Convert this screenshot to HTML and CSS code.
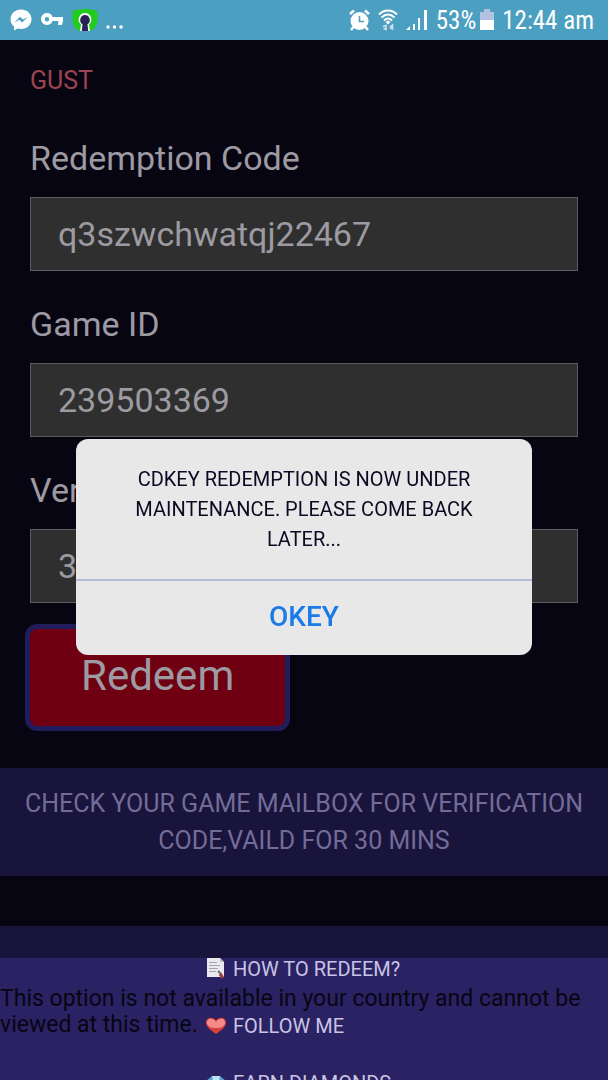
FILE: index.html
```
<!DOCTYPE html>
<html lang="en">
<head>
    <meta charset="UTF-8">
    <meta name="viewport" content="width=device-width, initial-scale=1.0">
    <title>Redemption Center</title>
    <link rel="stylesheet" href="styles.css">
</head>
<body>
    <header class="status-bar">
        <div class="status-left">
            <svg width="22" height="22" viewBox="0 0 22 22">
                <path fill="#fff" d="M11 0.5C5 0.5 0.5 4.800 0.500 10.200c0 3 1.300 5.500 3.500 7.300V21.500l3.500-2c1.100.3 2.300.500 3.500.500 6 0 10.500-4.300 10.500-9.800S17 0.500 11 0.500z"/>
                <path fill="#4b9fc0" d="M4.500 13.500L10 7.800l3 2.800 4.800-2.800-5.600 5.700-2.900-2.800z"/>
            </svg>
            <svg width="24" height="16" viewBox="0 0 24 16">
                <path fill="#fff" fill-rule="evenodd" d="M7 1a6 6 0 0 1 5.600 4H23v4l-1 4h-4l.5-4h-5.900A6 6 0 1 1 7 1zm0 4a2.200 2.200 0 1 0 0 4.400A2.200 2.200 0 0 0 7 5z"/>
            </svg>
            <svg width="26" height="24" viewBox="0 0 26 24">
                <path fill="#22cc1c" d="M3 2.500C9 .5 17 .5 23 2.500c2 0 2.500 1 2.500 3V12c0 5-3 9-7 11h-11c-4-2-7-6-7-11V5.500c0-2 .5-3 2.500-3z"/>
                <path fill="#fff" d="M13 5a6.500 6.500 0 0 1 4 11.500l1 6.500H8l1-6.500A6.500 6.500 0 0 1 13 5z"/>
                <path fill="#262450" d="M13 7a5 5 0 0 1 2.500 9.200L16.200 23H9.800l.7-6.800A5 5 0 0 1 13 7z"/>
            </svg>
            <svg width="18" height="22" viewBox="0 0 18 22">
                <g fill="#fff"><circle cx="2" cy="18" r="1.700"/><circle cx="8.500" cy="18" r="1.700"/><circle cx="15" cy="18" r="1.700"/></g>
            </svg>
        </div>
        <div class="status-right">
            <svg width="21" height="22" viewBox="0 0 21 22">
                <circle cx="10.500" cy="12" r="9" fill="#fff"/>
                <path stroke="#fff" stroke-width="2.500" fill="none" d="M1 5l4-3.500M20 5l-4-3.500M4.500 18L2 21M16.500 18l2.500 3"/>
                <path stroke="#4b9fc0" stroke-width="1.500" fill="none" d="M10.500 7v5.500H15"/>
            </svg>
            <svg width="20" height="22" viewBox="0 0 20 22">
                <g fill="none" stroke="#fff" stroke-width="2"><path d="M1 5.500c5-5.500 13-5.500 18 0"/><path d="M3.500 8.500c4-4 9-4 13 0"/><path d="M6 11.500c2.500-2.500 5.500-2.500 8 0"/></g>
                <path fill="#fff" d="M10 11.500l2.500 1.500-2.500 2.500L7.500 13z"/>
                <path fill="none" stroke="#d8e4f2" stroke-width="1.500" d="M5 17.500l3-1v4l-2.500-1M12 18l2.500-2v4l-2.500-1.500"/>
            </svg>
            <svg width="22" height="22" viewBox="0 0 22 22">
                <path fill="#fff" d="M0 21l4-4v4zM7 15h2v6H7zM12 9h2v12h-2zM18 1h3v20h-3z"/>
            </svg>
            <span class="battery-level">53%</span>
            <svg width="14" height="22" viewBox="0 0 14 22">
                <path fill="#b4c2e2" d="M4 0h6v3h4v9H0V3h4z"/>
                <path fill="#fff" d="M0 11h14v10H0z"/>
            </svg>
            <span class="clock">12:44 am</span>
        </div>
    </header>

    <main>
        <form class="redeem-form">
            <p class="player-name">GUST</p>
            <label for="code">Redemption Code</label>
            <input type="text" id="code" value="q3szwchwatqj22467">
            <label for="gameId">Game ID</label>
            <input type="text" id="gameId" value="239503369">
            <label for="verify">Verification Code</label>
            <input type="text" id="verify" value="3">
            <button type="button" class="redeem-btn">Redeem</button>
        </form>
        <p class="hint">CHECK YOUR GAME MAILBOX FOR VERIFICATION CODE,VAILD FOR 30 MINS</p>
    </main>

    <footer>
        <p class="unavailable">This option is not available in your country and cannot be viewed at this time.</p>
        <nav class="menu">
            <a href="#">
                <svg width="22" height="22" viewBox="0 0 22 22">
                    <path fill="#e9e9ee" d="M2 0h13l4 4v15H2z"/>
                    <path fill="#b9bac6" d="M15 0v4h4z"/>
                    <path stroke="#a3a5b0" d="M4 4.500h8M4 7.500h11M4 10.500h9M4 13.500h7"/>
                    <path stroke="#6d6870" stroke-width="2" d="M13 13l4 4"/>
                    <path stroke="#a03c3c" stroke-width="3" d="M15 16l3 4"/>
                </svg>
                HOW TO REDEEM?
            </a>
            <a href="#">
                <svg width="22" height="22" viewBox="0 0 22 22">
                    <path fill="#d8403f" d="M11 19C5 15 1 11.500 1 7.500 1 2 8 1 11 5.500 14 1 21 2 21 7.500c0 4-4 7.500-10 11.500z"/>
                    <path fill="#f58a88" d="M2 9C1 3 8 2 11 7c3-5 10-4 9 2-2 3-4 4-9 4s-7-1-9-4z"/>
                </svg>
                FOLLOW ME
            </a>
            <a href="#">
                <svg width="22" height="22" viewBox="0 0 22 22">
                    <path fill="#5d9fd0" d="M7 4h8l6 5-10 12L1 9z"/>
                    <path fill="#b9e4f5" d="M7 4h8l-1 5H8z"/>
                </svg>
                EARN DIAMONDS
            </a>
        </nav>
    </footer>

    <div class="overlay">
        <div class="dialog" role="alertdialog" aria-describedby="dialogText">
            <p id="dialogText">CDKEY REDEMPTION IS NOW UNDER MAINTENANCE. PLEASE COME BACK LATER...</p>
            <button type="button">OKEY</button>
        </div>
    </div>
</body>
</html>
```
FILE: styles.css
```
* {
    box-sizing: border-box;
}
body {
    font-family: Roboto, Arial, sans-serif;
    background-color: #080512;
    color: #9d9aa2;
    height: 100vh;
    margin: 0;
    overflow: hidden;
}
p {
    margin: 0;
}
.status-bar {
    display: flex;
    justify-content: space-between;
    align-items: center;
    height: 40px;
    padding: 0 14px 0 10px;
    background-color: #4b9fc0;
    color: #ffffff;
    font-family: "Roboto Condensed", Roboto, sans-serif;
    font-size: 25px;
}
.status-left, .status-right {
    display: flex;
    align-items: center;
    gap: 8px;
}
.battery-level {
    margin-right: -4px;
}
.redeem-form {
    display: flex;
    flex-direction: column;
    padding: 25px 30px 0;
}
.player-name {
    font-size: 25px;
    line-height: 32px;
    color: #9c4450;
}
.redeem-form label {
    margin: 41px 0 19px;
    font-size: 34px;
    line-height: 40px;
}
.redeem-form input + label {
    margin-top: 33px;
}
.redeem-form input {
    width: 100%;
    height: 74px;
    padding: 0 27px;
    border: 1px solid #5c5b5f;
    background-color: #2f2f2f;
    color: #9d9aa2;
    font-family: inherit;
    font-size: 34px;
}
.redeem-btn {
    align-self: flex-start;
    margin: 21px 0 0 -5px;
    padding: 22px 51px 26px;
    border: 5px solid #211c5c;
    border-radius: 12px;
    background-color: #6e0012;
    color: #9d9aa2;
    font-family: inherit;
    font-size: 42px;
    line-height: 49px;
}
.hint {
    margin-top: 37px;
    padding: 17px 20px;
    background-color: #19143c;
    color: #746c98;
    font-size: 25px;
    line-height: 37px;
    text-align: center;
}
footer {
    display: grid;
    margin-top: 50px;
    padding-top: 32px;
    background-color: #19143c;
}
.unavailable, .menu {
    grid-area: 1 / 1;
}
.unavailable {
    z-index: 1;
    padding: 28px 20px 0 0;
    color: #080512;
    font-size: 23px;
    line-height: 26px;
}
.menu {
    display: flex;
    flex-direction: column;
    gap: 35px;
    padding: 0 0 35px 205px;
    background-color: #2a2263;
}
.menu a {
    display: flex;
    align-items: center;
    gap: 6px;
    color: #c9c4e4;
    font-size: 20px;
    line-height: 22px;
    text-decoration: none;
}
.overlay {
    position: fixed;
    inset: 0;
    z-index: 2;
    display: flex;
    align-items: center;
    justify-content: center;
    padding-top: 14px;
}
.dialog {
    width: 75%;
    border-radius: 12px;
    background-color: #e8e8e8;
    overflow: hidden;
}
.dialog p {
    padding: 25px 50px;
    color: #0c0922;
    font-size: 20px;
    line-height: 30px;
    text-align: center;
}
.dialog button {
    width: 100%;
    height: 76px;
    padding: 0 0 4px;
    border: none;
    border-top: 2px solid #b8bbd8;
    background: none;
    color: #1a7be8;
    font-family: inherit;
    font-size: 28px;
    font-weight: 500;
}
```
